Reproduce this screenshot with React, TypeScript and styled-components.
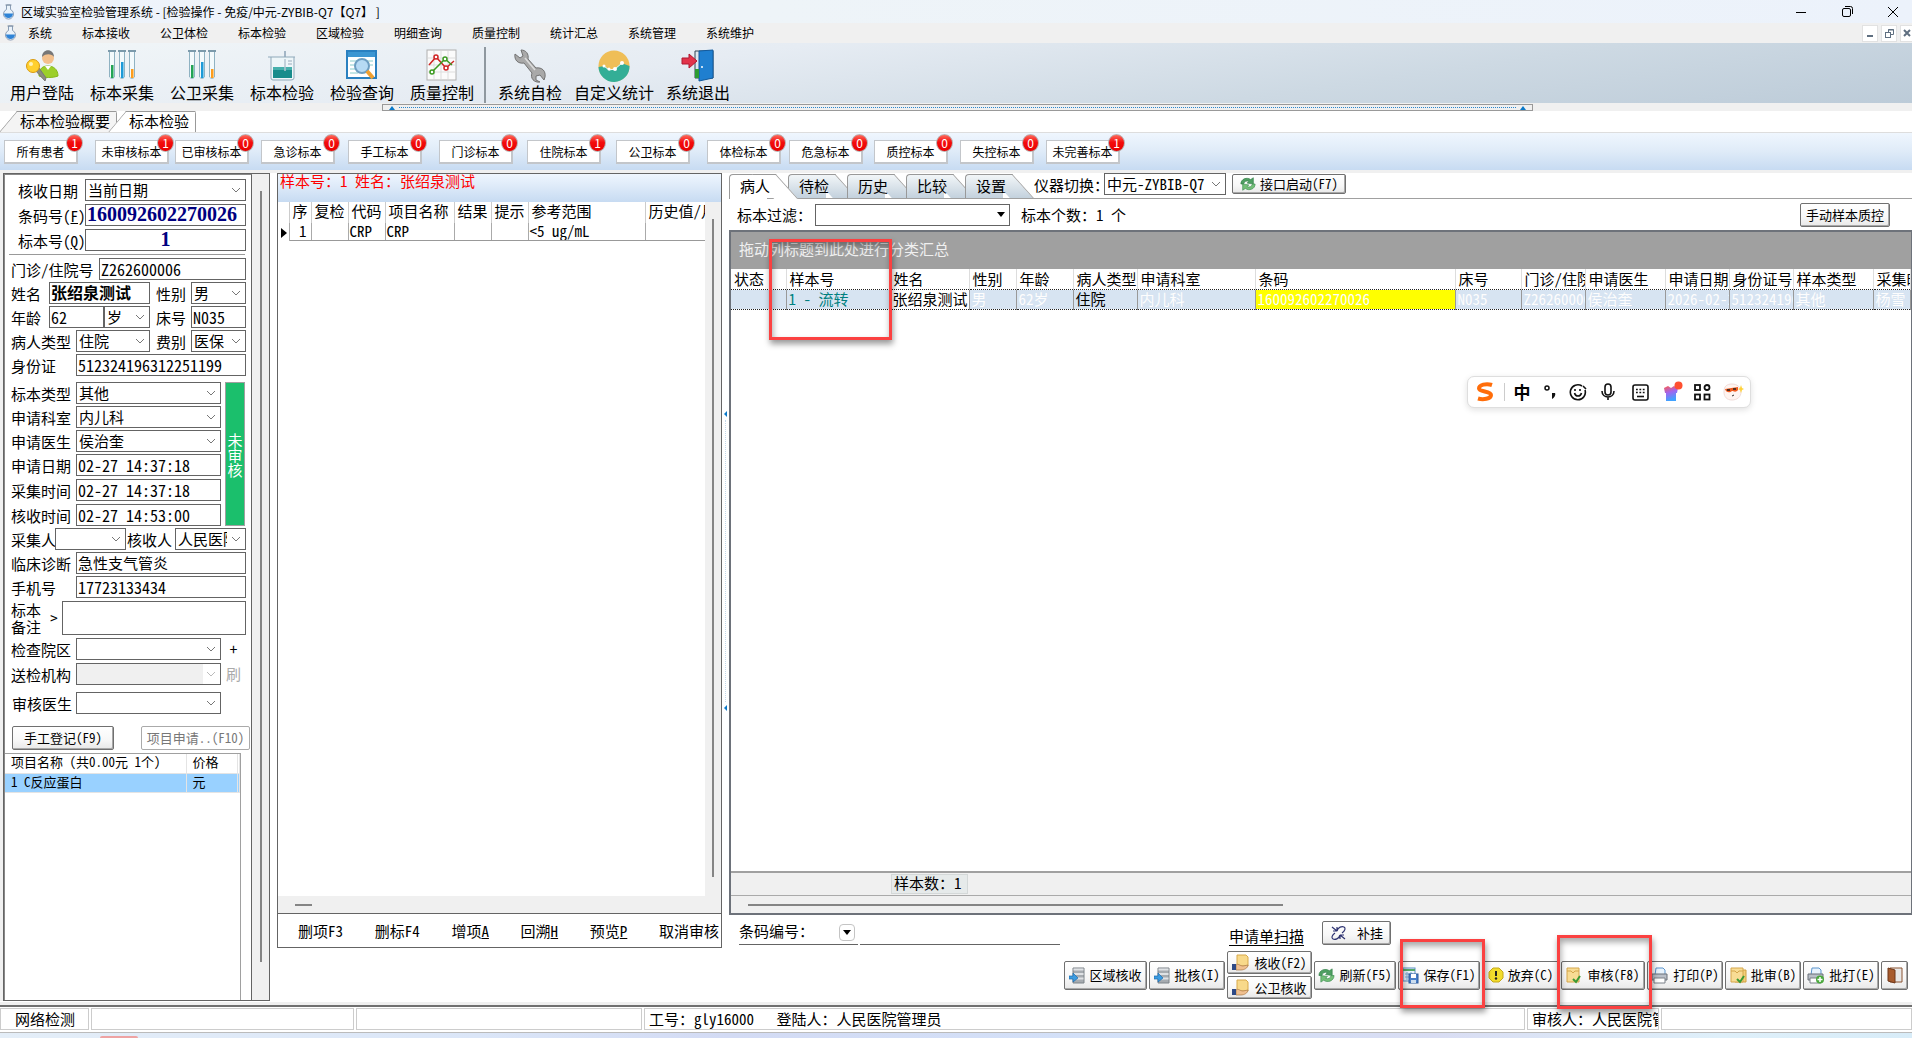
import React from 'react';
import styled, { createGlobalStyle, css } from 'styled-components';

const song = '"Noto Sans Mono CJK SC", "Liberation Serif", "Noto Sans CJK SC", serif';
const ui = '"Noto Sans CJK SC", "Noto Sans", sans-serif';
const line = '#646464';

const Global = createGlobalStyle`
  *, *::before, *::after { box-sizing: border-box; }
  html, body { margin: 0; background: #f0f0f0; }
  body { font: 15px/18px ${song}; color: #000; overflow: hidden; }
  button, input, select, textarea { font: inherit; color: inherit; margin: 0; border-radius: 0; }
  table { border-collapse: collapse; table-layout: fixed; }
  th { font-weight: 400; text-align: left; }
  th, td { padding: 0; white-space: nowrap; overflow: hidden; }
`;

const Shell = styled.div`
  position: relative;
  display: flex;
  flex-direction: column;
  min-height: 100vh;
`;

/* ---------- window chrome ---------- */
const TitleBar = styled.header`
  display: flex;
  align-items: center;
  height: 23px;
  padding-left: 2px;
  gap: 6px;
  background: linear-gradient(90deg, #eef3fb, #eef4f8 40%, #ecf2fb);
  font: 12px/18px ${ui};
`;
const WindowButtons = styled.div`
  display: flex;
  margin: 0 -4px 0 auto;
`;
const WindowButton = styled.button`
  display: grid;
  place-items: center;
  width: 46px;
  height: 20px;
  padding: 0;
  border: 0;
  background: none;
`;
const MenuBar = styled.nav`
  display: flex;
  align-items: center;
  height: 20px;
  padding-left: 4px;
  background: #f0f0f0;
  font: 12px/16px ${ui};
`;
const MenuItem = styled.button<{ $first?: boolean }>`
  width: ${(p) => (p.$first ? 50 : 78)}px;
  padding: 0 ${(p) => (p.$first ? 4 : 0)}px 0 0;
  border: 0;
  background: none;
  text-align: center;
`;
const MdiButtons = styled.div`
  display: flex;
  gap: 3px;
  margin-left: auto;
`;
const MdiButton = styled.button`
  display: grid;
  place-items: center;
  width: 16px;
  height: 17px;
  padding: 0;
  border: 1px solid #e2e2e2;
  background: #fff;
  &:last-child { width: 12px; border-right: 0; }
`;
const Toolbar = styled.div`
  display: flex;
  height: 60px;
  padding-left: 2px;
  background: linear-gradient(172deg, #f1f6f8 0%, #e6ecf3 35%, #cdd9e3 70%, #bccbd8 100%);
`;
const Tool = styled.button<{ $w?: number }>`
  display: flex;
  flex-direction: column;
  align-items: center;
  justify-content: flex-start;
  width: ${(p) => p.$w ?? 80}px;
  padding: 6px 0 0;
  border: 0;
  background: none;
  font-size: 16px;
  line-height: 18px;
  white-space: nowrap;
  svg { display: block; }
`;
const ToolDivider = styled.span`
  width: 2px;
  margin: 4px 4px 0 2px;
  background: #8f989f;
`;
const TopSplitter = styled.div`
  display: flex;
  align-items: center;
  justify-content: space-between;
  width: 60.2%;
  height: 7px;
  margin: 1px 0 0 20%;
  padding: 0 6px;
  border: 1px solid #999;
  &::before, &::after {
    content: '';
    border: 3px solid transparent;
    border-top: 0;
    border-bottom: 4px solid #0a78c8;
  }
`;
const Dots = styled.span`
  flex: 1;
  margin: 0 4px;
  border-top: 1px dotted #2a86cc;
`;

/* ---------- document tabs ---------- */
const DocTabs = styled.div`
  display: flex;
  height: 22px;
  background: #fff;
  border-bottom: 1px solid #ddd;
`;
const DocTab = styled.button<{ $active?: boolean }>`
  position: relative;
  z-index: ${(p) => (p.$active ? 2 : 1)};
  height: 21px;
  margin-right: -8px;
  padding: 0 6px 2px 20px;
  border: 0;
  border-right: 1px solid #999;
  border-top-right-radius: 3px;
  background: none;
  line-height: 18px;
  white-space: nowrap;
  &::before {
    content: '';
    position: absolute;
    z-index: -1;
    inset: 0 0 0 8px;
    border: 1px solid #999;
    border-width: 1px 0 0 1px;
    transform: skewX(-40deg);
    background: ${(p) => (p.$active ? '#fff' : '#f4f4f4')};
    clip-path: inset(0 8px 0 0);
  }
  &::after {
    content: '';
    position: absolute;
    z-index: -1;
    inset: 0 0 0 24px;
    border-top: 1px solid #999;
    background: ${(p) => (p.$active ? '#fff' : '#f4f4f4')};
  }
`;

/* ---------- sample counters ---------- */
const Counters = styled.div`
  display: grid;
  grid-template-columns: 91px 80px 86px 87px 91px 88px 89px 91px 82px 85px 86px 86px 74px;
  align-items: center;
  height: 37px;
  padding: 0 4px;
  background: linear-gradient(#eff6fe, #dfebf8 50%, #c7dbf2);
`;
const Counter = styled.button`
  position: relative;
  width: 74px;
  height: 24px;
  padding: 1px 0 0;
  border: 2px solid #c3c6ca;
  border-width: 1px 2px 2px 1px;
  background: #fff;
  font: 12px/20px ${ui};
`;
const Badge = styled.span`
  position: absolute;
  top: -7px;
  right: -7px;
  width: 17px;
  height: 18px;
  border: 1px solid #b9b0b0;
  border-radius: 50%;
  background: linear-gradient(#ff6a5c, #f30d0d 45%, #e80000);
  color: #fff;
  font: 12px/15px ${ui};
  text-align: center;
`;

/* ---------- main area ---------- */
const Main = styled.main`
  display: flex;
  flex: 1;
  margin: 3px 0 3px;
  background: #fff;
  min-height: 0;
`;
const LeftPanel = styled.section`
  display: flex;
  flex: none;
  width: 267px;
  margin: 0 0 1px 3px;
  border: 1px solid ${line};
  box-shadow: -3px 0 #f0f0f0;
`;
const LeftBody = styled.div`
  display: flex;
  flex-direction: column;
  width: 248px;
  border: 1px solid #888;
  border-width: 1px 1px 0;
  border-right-color: ${line};
`;
const ScrollTrack = styled.div<{ $top: number; $bottom: number }>`
  flex: 1;
  display: flex;
  justify-content: center;
  padding: ${(p) => p.$top}px 0 ${(p) => p.$bottom}px;
  background: #f0f0f0;
  &::before { content: ''; width: 2px; background: #858585; }
`;
const Form = styled.form`
  display: flex;
  flex-direction: column;
  padding: 4px 5px 0 6px;
`;
const Group = styled.div<{ $gap?: number; $mt?: number }>`
  display: flex;
  flex-direction: column;
  gap: ${(p) => p.$gap ?? 2}px;
  margin-top: ${(p) => p.$mt ?? 0}px;
`;
const Row = styled.div`
  display: flex;
  align-items: center;
`;
const Label = styled.label<{ $w: number; $pl?: number }>`
  flex: none;
  width: ${(p) => p.$w}px;
  padding-left: ${(p) => p.$pl ?? 0}px;
  line-height: 17px;
  white-space: nowrap;
`;
const Rule = styled.hr`
  width: 236px;
  height: 2px;
  margin: 3px 0 2px -2px;
  border: 0;
  border-top: 1px solid #999;
`;
const fieldBox = css<{ $w?: number }>`
  ${(p) => (p.$w ? `flex: none; width: ${p.$w}px;` : 'flex: 1; min-width: 0;')}
  height: 22px;
  border: 1px solid ${line};
  background: #fff;
`;
const Input = styled.input<{ $w?: number; $look?: 'code' | 'name' | 'digits'; $center?: boolean }>`
  ${fieldBox}
  padding: 0 1px 1px;
  ${(p) => p.$look === 'digits' && 'font-size: 16px;'}
  ${(p) => p.$look === 'name' && 'font-size: 16px; font-weight: 700; padding-bottom: 3px;'}
  ${(p) => p.$look === 'code' && 'font: 700 20px/20px "Liberation Serif", serif; color: #000080;'}
  ${(p) => p.$center && 'text-align: center;'}
`;
const SelectBox = styled.span<{ $w?: number; $off?: boolean }>`
  ${fieldBox}
  position: relative;
  display: flex;
  ${(p) => p.$off && 'background: linear-gradient(90deg, #f0f0f0 88%, #fff 88%); color: #aaa;'}
  svg { position: absolute; right: 4px; top: 7px; pointer-events: none; }
`;
const NativeSelect = styled.select`
  appearance: none;
  width: 100%;
  padding: 0 18px 1px 2px;
  border: 0;
  background: none;
`;
const FlaggedRow = styled.div`
  display: flex;
  margin-top: 6px;
`;
const StateFlag = styled.div`
  display: grid;
  place-items: center;
  width: 20px;
  margin: 0 1px 0 4px;
  border: 1px solid #a0a0a0;
  background: #1bbf6c;
  color: #fff;
  line-height: 15px;
  text-align: center;
`;
const Memo = styled.textarea`
  flex: 1;
  min-width: 0;
  height: 34px;
  border: 1px solid ${line};
  resize: none;
`;
const FlatButton = styled.button<{ $w: number }>`
  width: ${(p) => p.$w}px;
  padding: 0;
  border: 0;
  background: none;
  &:disabled { color: #aaa; }
`;
const PushButton = styled.button<{ $w?: number; $h?: number }>`
  display: flex;
  align-items: center;
  justify-content: center;
  gap: 4px;
  flex: none;
  width: ${(p) => (p.$w ? `${p.$w}px` : 'auto')};
  height: ${(p) => p.$h ?? 24}px;
  padding: 0;
  border: 1px solid #707070;
  border-radius: 2px;
  background: linear-gradient(#fff, #f7f7f7 60%, #e8e8e8);
  box-shadow: inset -1px -1px #a8a8a8;
  font-size: 13px;
  line-height: 16px;
  white-space: nowrap;
  &:disabled { color: #777; background: #fff; border-color: #aaa; box-shadow: none; }
`;
const TabButton = styled(PushButton)`
  margin: 1px 0 0 6px;
`;
const WideButton = styled(PushButton)`
  gap: 10px;
`;
const FormButtons = styled.div`
  display: flex;
  justify-content: space-between;
  margin: 12px -4px 3px 1px;
`;
const FeeArea = styled.div`
  flex: 1;
  width: 236px;
  border: 1px solid #a0a0a0;
  border-width: 1px 1px 0 0;
`;
const FeeTable = styled.table`
  width: 100%;
  font-size: 13px;
  line-height: 16px;
  th, td { padding: 0 0 2px 6px; border: 1px solid #e4e4e4; border-width: 0 1px 1px 0; height: 19px; }
  td { background: #99d1ff; }
`;

/* ---------- result panel ---------- */
const MidPanel = styled.section`
  display: flex;
  flex-direction: column;
  flex: none;
  width: 445px;
  margin: 0 0 54px 7px;
  border: 1px solid ${line};
`;
const SampleTitle = styled.h2`
  height: 28px;
  margin: 0;
  padding-left: 2px;
  background: linear-gradient(#eff6fe, #c7dbf2);
  color: #f00;
  font: 15px/14px ${song};
`;
const ResultArea = styled.div`
  display: flex;
  flex: 1;
`;
const ResultBody = styled.div`
  width: 427px;
  overflow: hidden;
`;
const ResultTable = styled.table`
  width: 427px;
  th { height: 21px; padding: 0 0 3px 3px; border-right: 1px solid #ccc; }
  td { height: 17px; line-height: 16px; padding-left: 1px; border-right: 1px solid #aaa; border-bottom: 1px solid #999; }
  th:first-child, td:first-child { padding-left: 3px; border-bottom: 0; }
  td:nth-child(2) { text-align: right; padding-right: 4px; }
  th:last-child, td:last-child { border-right: 0; }
`;
const HScroll = styled.div<{ $left: number; $w: string }>`
  display: flex;
  align-items: center;
  height: 17px;
  padding-left: ${(p) => p.$left}px;
  background: #f0f0f0;
  &::before { content: ''; width: ${(p) => p.$w}; height: 2px; background: #858585; }
`;
const ResultActions = styled.div`
  display: flex;
  align-items: center;
  justify-content: space-between;
  height: 34px;
  padding: 0 2px 0 20px;
  border-top: 1px solid ${line};
`;
const TextButton = styled.button`
  padding: 0;
  border: 0;
  background: none;
  white-space: nowrap;
`;
const SideSplitter = styled.div`
  display: flex;
  flex-direction: column;
  flex: none;
  align-items: center;
  justify-content: space-between;
  width: 7px;
  height: 300px;
  margin-top: 238px;
  &::before, &::after {
    content: '';
    border: 3px solid transparent;
    border-left: 0;
    border-right-color: #0a78c8;
  }
`;
const DotsV = styled.span`
  flex: 1;
  margin: 3px 0;
  border-left: 1px dotted #c4d8ea;
`;

/* ---------- patient panel ---------- */
const RightPanel = styled.section`
  display: flex;
  flex-direction: column;
  flex: 1;
  min-width: 0;
`;
const TabRow = styled.div`
  display: flex;
  align-items: flex-start;
  height: 26px;
  border-bottom: 1px solid #a0a0a0;
`;
const PanelTab = styled.button<{ $active?: boolean }>`
  position: relative;
  z-index: ${(p) => (p.$active ? 3 : 1)};
  width: 59px;
  height: 25px;
  margin-top: 1px;
  padding: 0 0 2px 11px;
  border: 0;
  background: none;
  text-align: left;
  line-height: 22px;
  &::before, &::after {
    content: '';
    position: absolute;
    z-index: -1;
    top: 0;
    height: ${(p) => (p.$active ? 25 : 24)}px;
    border-top: 1px solid #999;
    background: ${(p) => (p.$active ? '#fff' : 'linear-gradient(#f2f6f8, #c3d1dd)')};
  }
  &::before { left: 0; width: 38px; border-left: 1px solid #999; border-top-left-radius: 4px; }
  &::after { left: 34px; width: 24px; border-right: 1px solid #999; transform: skewX(42deg); }
`;
const DeviceLabel = styled.label`
  width: 80px;
  padding-left: 10px;
  line-height: 24px;
  white-space: nowrap;
`;
const FilterRow = styled.div`
  display: flex;
  align-items: center;
  height: 31px;
  padding: 0 22px 0 8px;
`;
const FilterCount = styled.span`
  margin: 0 auto 0 11px;
`;
const Grid = styled.div`
  position: relative;
  display: flex;
  flex-direction: column;
  flex: 1;
  border: 2px solid #6d727a;
  border-right-width: 1px;
`;
const GroupHint = styled.div`
  height: 37px;
  padding-left: 8px;
  background: #a0a0a0;
  color: #f0f0f0;
  line-height: 34px;
`;
const PatientTable = styled.table`
  width: 100%;
  th { height: 20px; padding: 0 0 1px 3px; border-right: 1px solid #ddd; line-height: 17px; }
`;
const Cell = styled.td<{ $kind?: string }>`
  height: 20px;
  padding: 0 0 1px 2px;
  line-height: 17px;
  border: 1px dotted #222;
  border-width: 1px 0;
  border-right: 1px solid #999;
  background: ${(p) => (p.$kind === 'code' ? '#ffff00' : p.$kind === 'name' ? '#fff' : '#d7e4f2')};
  color: ${(p) =>
    p.$kind === 'no' ? '#008080' : p.$kind === 'name' || p.$kind === 'type' ? '#000' : '#fdfdfd'};
`;
const GridSpace = styled.div`
  flex: 1;
`;
const GridFooter = styled.div`
  display: flex;
  align-items: center;
  height: 25px;
  padding-left: 160px;
  border-top: 2px solid #a0a0a0;
  border-bottom: 1px solid #aaa;
  background: #f0f0f0;
`;
const FooterCell = styled.span`
  width: 77px;
  height: 20px;
  padding-left: 2px;
  border: 1px solid #d4d8d8;
  background: #e6eaea;
  line-height: 16px;
`;
const Highlight = styled.span<{ $x: number; $y: number; $w: number; $h: number }>`
  position: absolute;
  z-index: 5;
  left: ${(p) => p.$x}px;
  top: ${(p) => p.$y}px;
  width: ${(p) => p.$w}px;
  height: ${(p) => p.$h}px;
  border: 3px solid #fb4141;
  box-shadow: 1px 4px 6px rgba(0, 0, 0, 0.4), inset 1px 4px 6px rgba(0, 0, 0, 0.35);
  pointer-events: none;
`;
const Actions = styled.div`
  display: flex;
  justify-content: space-between;
  height: 87px;
  padding: 6px 4px 0 10px;
`;
const BarcodeBox = styled.div`
  display: flex;
  gap: 2px;
  height: 24px;
`;
const BarcodeMode = styled.div`
  display: flex;
  justify-content: space-between;
  width: 119px;
  padding-right: 3px;
  border-bottom: 1px solid ${line};
  line-height: 20px;
`;
const DropButton = styled.button`
  display: grid;
  place-items: center;
  width: 16px;
  height: 17px;
  margin-top: 3px;
  padding: 0;
  border: 1px solid #c4c4c4;
  border-radius: 4px;
  background: #fff;
`;
const LineInput = styled.input`
  width: 200px;
  padding: 0;
  border: 0;
  border-bottom: 1px solid ${line};
  background: none;
`;
const ActionColumn = styled.div`
  display: flex;
  flex-direction: column;
  gap: 6px;
`;
const ScanRow = styled.div`
  display: flex;
  align-items: center;
  gap: 18px;
  height: 24px;
  padding-left: 165px;
`;
const ScanLink = styled.a`
  padding-top: 6px;
  color: #000;
  text-decoration: underline;
  text-underline-offset: 3px;
`;
const ButtonRow = styled.div`
  display: flex;
  align-items: center;
  gap: 2px;
`;
const Stack = styled.div`
  display: flex;
  flex-direction: column;
  gap: 2px;
`;
const Marked = styled.span`
  position: relative;
`;

/* ---------- status bar ---------- */
const StatusBar = styled.footer`
  display: flex;
  gap: 2px;
  height: 28px;
  padding: 1px 0 2px;
  border-top: 2px solid #707070;
  border-bottom: 1px solid #bbb;
  background: #fff;
`;
const StatusCell = styled.div<{ $w?: number; $pl?: number }>`
  ${(p) => (p.$w ? `width: ${p.$w}px;` : 'flex: 1; min-width: 0;')}
  padding-left: ${(p) => p.$pl ?? 4}px;
  border: 1px solid #ccc;
  line-height: 20px;
  white-space: pre;
  overflow: hidden;
`;
const Taskbar = styled.div`
  position: relative;
  height: 5px;
  background: linear-gradient(90deg, #e4eef8, #dbe6f8 25%, #d3dbf4 38%, #d4e2f9 60%, #d9ddf3 75%, #dff0fa 90%, #d8ecf8);
  &::before {
    content: '';
    position: absolute;
    left: 100px;
    bottom: 0;
    width: 38px;
    height: 2px;
    border-radius: 3px 3px 0 0;
    background: #eea3a3;
  }
`;

/* ---------- input method bar ---------- */
const ImeBar = styled.div`
  position: absolute;
  z-index: 6;
  right: 161px;
  top: 376px;
  display: grid;
  grid-template-columns: 34px 4px 32px 24px 32px 28px 36px 30px 28px 34px;
  place-items: center;
  height: 32px;
  border: 1px solid #dedede;
  border-radius: 7px;
  background: #fff;
  box-shadow: 0 2px 6px rgba(0, 0, 0, 0.12);
  font: 700 17px/18px ${ui};
`;
const ImeDivider = styled.span`
  width: 1px;
  height: 18px;
  background: #ccc;
`;

/* ---------- drawings ---------- */
const Chevron = ({ off }: { off?: boolean }) => (
  <svg width="10" height="7" viewBox="0 0 10 7">
    <path d="M1 1l4 4 4-4" fill="none" stroke={off ? '#bbb' : '#777'} />
  </svg>
);
const Triangle = () => (
  <svg width="8" height="5" viewBox="0 0 8 5"><path d="M0 0h8L4 5z" fill="#000" /></svg>
);
const Flask = () => (
  <svg width="13" height="16" viewBox="0 0 13 16">
    <path d="M4.500 1v4.500a5 5 0 1 0 4 0V1z" fill="#eaf2fa" stroke="#8a9db5" />
    <path d="M2 9.500h9a4.500 4.500 0 0 1-9 0z" fill="#2f83d6" />
    <path d="M3.500 1h6" stroke="#7a8ba0" />
  </svg>
);
const UserKey = () => (
  <svg width="34" height="34" viewBox="0 0 34 34">
    <path d="M14 27c0-8 4-10 9-10s10 3 10 10c-5 2-14 2-19 0z" fill="#9ccf2a" stroke="#86b81c" />
    <path d="M20 17l3 4 3-4z" fill="#fff" />
    <circle cx="23" cy="9" r="6" fill="#f3c08c" />
    <path d="M17 8c0-9 12-9 12 0-2-3-8-4-12 0z" fill="#777" />
    <path d="M10 21l10 11 1-3-7-10z" fill="#8d8d7c" stroke="#777" />
    <circle cx="8" cy="17" r="6.500" fill="#ffd02e" stroke="#d99a10" />
    <circle cx="6" cy="15" r="2" fill="#fff3b8" />
  </svg>
);
const Tubes = () => (
  <svg width="32" height="34" viewBox="0 0 32 34">
    {[['#23a455', 15], ['#1d9ad8', 12], ['#ff9d1c', 19]].map(([c, y], i) => (
      <g key={i} transform={`translate(${2 + i * 10} 1)`}>
        <path d="M1.500 1v26a3 3 0 0 0 5 0V1" fill="#f3fafc" stroke="#8fb2c2" />
        <path d="M0 1h8" stroke="#7c9aab" strokeWidth="2" />
        <rect x="3" y={y as number} width="2.500" height={28 - (y as number)} fill={c as string} />
      </g>
    ))}
  </svg>
);
const Beaker = () => (
  <svg width="34" height="34" viewBox="0 0 34 34">
    <path d="M20 2v20" stroke="#a3b6c6" strokeWidth="2" />
    <path d="M3 8h27M6 8v21q0 2 2 2h18q3 0 3-2V8" fill="#eef6f9" stroke="#8fa9ba" />
    <rect x="8" y="18" width="19" height="11" fill="#178c8c" />
    <path d="M8 18h19v3H8z" fill="#46b0ac" />
    <path d="M20 10v12" stroke="#b5c4d0" strokeWidth="1.500" />
    <path d="M23 12h4M23 15h4" stroke="#9ab" />
  </svg>
);
const SearchWindow = () => (
  <svg width="32" height="34" viewBox="0 0 32 34">
    <rect x="1" y="2" width="29" height="27" fill="#fff" stroke="#2a80c0" strokeWidth="2" />
    <rect x="2" y="3" width="27" height="5" fill="#3c96d2" />
    <path d="M4 12h8M4 16h5M4 20h5M4 24h8M22 12h5M24 16h3" stroke="#8cc" />
    <circle cx="16" cy="17" r="7" fill="#b6daf4" stroke="#6d9ec2" strokeWidth="2" />
    <path d="M21 22l6 7" stroke="#f0a030" strokeWidth="4" />
  </svg>
);
const QcChart = () => (
  <svg width="32" height="34" viewBox="0 0 32 34">
    <rect x="1" y="1" width="29" height="30" fill="#fbfbfb" stroke="#b0b0b0" />
    <path d="M2 9h27M2 16h27M2 23h27M8 2v28M15 2v28M22 2v28" stroke="#ddd" />
    <path d="M3 16l7-8 10 11 8-7" fill="none" stroke="#d02424" strokeWidth="1.500" />
    <path d="M6 23l13-13 7 6" fill="none" stroke="#3a9a20" strokeWidth="1.500" />
    <g fill="#fff" strokeWidth="1.500">
      <circle cx="10" cy="8" r="2" stroke="#d02424" /><circle cx="20" cy="19" r="2" stroke="#d02424" />
      <circle cx="6" cy="23" r="2" stroke="#3a9a20" /><circle cx="19" cy="10" r="2" stroke="#3a9a20" />
    </g>
  </svg>
);
const Wrench = () => (
  <svg width="34" height="34" viewBox="0 0 34 34">
    <path d="M8 1c5 0 8 4 7 9l8 9c6-1 10 3 9 9l-1 3-4-5-4 1 0 4 4 2c-6 1-10-4-8-9L11 14C5 15 1 11 2 5l5 4 3-2z" fill="#a9a9a9" stroke="#727272" />
    <path d="M12 9l10 12" stroke="#dcdcdc" strokeWidth="1.500" />
  </svg>
);
const StatsBall = () => (
  <svg width="34" height="34" viewBox="0 0 34 34">
    <circle cx="17" cy="17" r="15.500" fill="#efbe57" />
    <path d="M1.500 18l6-1 5 4 5-1 7-6 8 3a15.500 15.500 0 0 1-31 1z" fill="#33ae96" />
    <path d="M7 17l5 4 6-1 7-6" fill="none" stroke="#fff" />
    <g fill="#fff"><circle cx="7" cy="17" r="1.500" /><circle cx="12" cy="20" r="1.500" /><circle cx="18" cy="20" r="2" /><circle cx="25" cy="14" r="2" /></g>
  </svg>
);
const ExitDoor = () => (
  <svg width="34" height="34" viewBox="0 0 34 34">
    <path d="M14 2h18v27H14z" fill="#dfe8ef" stroke="#345" />
    <path d="M18 2l14-1v28l-14 3z" fill="#1f7fd0" stroke="#125a9c" />
    <path d="M14 20h4v9h-4z" fill="#2d9b32" />
    <path d="M1 9h7V5l8 7-8 7v-4H1z" fill="#e2334a" stroke="#b01830" />
    <circle cx="21" cy="18" r="1" fill="#fff" />
  </svg>
);
const Refresh = ({ s = 18 }: { s?: number }) => (
  <svg width={s} height={s} viewBox="0 0 18 18">
    <path d="M1 9c0-6 7-8 11-5l3-2 0 7-7-1 2-2c-3-1-5 0-6 3z" fill="#4f9f62" stroke="#2e7d45" strokeWidth=".7" />
    <path d="M17 9c0 6-7 8-11 5l-3 2 0-7 7 1-2 2c3 1 5 0 6-3z" fill="#74bf78" stroke="#3b8d50" strokeWidth=".7" />
  </svg>
);
const Server = () => (
  <svg width="16" height="18" viewBox="0 0 16 18">
    <path d="M4 2h11v15H4z" fill="#a6abb0" stroke="#7d8389" />
    <path d="M4.500 3.500h10M4.500 8h10M4.500 12.500h10" stroke="#dfe2e5" strokeWidth="2" />
    <path d="M0 10h4V7l5 5-5 4v-3H0z" fill="#3b9be0" stroke="#1c6cae" strokeWidth=".7" />
  </svg>
);
const HandDoc = () => (
  <svg width="18" height="17" viewBox="0 0 18 17">
    <path d="M5 1h9l2 2v9H5z" fill="#f8d98a" stroke="#d8a94a" />
    <path d="M4 11c2-2 4 1 7 1l5-1c0 3-4 5-7 5H4z" fill="#f0c090" stroke="#a87848" strokeWidth=".7" />
    <path d="M0 10h4v6H0z" fill="#2f4a86" />
  </svg>
);
const SaveIcon = () => (
  <svg width="17" height="17" viewBox="0 0 17 17">
    <rect x="1" y="1" width="12" height="13" fill="#eaf3fb" stroke="#5a8fc4" />
    <path d="M1 3h12" stroke="#55a868" strokeWidth="2" />
    <path d="M3 7h8M3 10h8M5 5v8M9 5v8" stroke="#7aa8d0" />
    <rect x="7" y="7" width="9" height="9" fill="#4a7fc8" stroke="#2a5a9c" />
    <rect x="9" y="7" width="5" height="4" fill="#fff" /><rect x="9" y="13" width="5" height="3" fill="#cde" />
  </svg>
);
const Alert = () => (
  <svg width="16" height="16" viewBox="0 0 16 16">
    <path d="M5 1h6l4 4v6l-4 4H5l-4-4V5z" fill="#f2dc2c" stroke="#c4a81a" />
    <path d="M8 4v5" stroke="#222" strokeWidth="2" /><circle cx="8" cy="11.500" r="1.200" fill="#222" />
  </svg>
);
const DocCheck = ({ two }: { two?: boolean }) => (
  <svg width="17" height="17" viewBox="0 0 17 17">
    {two && <path d="M5 3h11v12H5z" fill="#f4cf78" stroke="#cfa040" />}
    <path d="M1 1h12v14H1z" fill="#f8dc94" stroke="#d4a64c" />
    <path d="M1 4h4l2 2 2-2h4" fill="none" stroke="#d4a64c" />
    <path d="M7 12l3 3 4-6" fill="none" stroke="#3a9a34" strokeWidth="2" />
  </svg>
);
const Printer = ({ plus }: { plus?: boolean }) => (
  <svg width="18" height="17" viewBox="0 0 18 17">
    <path d="M5 1h7l2 2v5H4z" fill="#e8f3fd" stroke="#5b94cc" />
    <path d="M1 7h15v6H1z" fill="#b9bfc8" stroke="#6a7078" />
    <path d="M3 11h11v5H3z" fill="#fff" stroke="#7a8088" />
    {plus && <><circle cx="13" cy="12.500" r="4" fill="#4aa83c" /><path d="M13 10v5M10.500 12.500h5" stroke="#fff" strokeWidth="1.500" /></>}
  </svg>
);
const Door = () => (
  <svg width="16" height="17" viewBox="0 0 16 17">
    <path d="M3 1h12v14H3z" fill="#e8e8e8" stroke="#8a5230" />
    <path d="M1 1l7 2v13l-7-2z" fill="#a85c2e" stroke="#6e3618" />
  </svg>
);
const Swap = () => (
  <svg width="17" height="16" viewBox="0 0 17 16" fill="none" stroke="#2c3170" strokeWidth="1.200">
    <path d="M7 6c1-4 5-5 7-4s1 4-2 6M7 6L2 2M7 6V2M7 6H3" />
    <path d="M10 10c-1 4-5 5-7 4s-1-4 2-6M10 10l5 4M10 10v4M10 10h4" />
  </svg>
);

/* ---------- building blocks ---------- */
type SelectProps = { id: string; value?: string; w?: number; off?: boolean; label?: string };
const Select = ({ id, value = '', w, off, label }: SelectProps) => (
  <SelectBox $w={w} $off={off}>
    <NativeSelect id={id} disabled={off} defaultValue={value} aria-label={label}>
      <option>{value}</option>
    </NativeSelect>
    <Chevron off={off} />
  </SelectBox>
);

const menus = ['标本接收', '公卫体检', '标本检验', '区域检验', '明细查询', '质量控制', '统计汇总', '系统管理', '系统维护'];
const counters: [string, number][] = [
  ['所有患者', 1], ['未审核标本', 1], ['已审核标本', 0], ['急诊标本', 0], ['手工标本', 0], ['门诊标本', 0], ['住院标本', 1],
  ['公卫标本', 0], ['体检标本', 0], ['危急标本', 0], ['质控标本', 0], ['失控标本', 0], ['未完善标本', 1],
];
const columns: [string, number | undefined, string, string?][] = [
  ['状态', 55, ''], ['样本号', 104, '1 - 流转', 'no'], ['姓名', 79, '张绍泉测试', 'name'], ['性别', 47, '男'], ['年龄', 57, '62岁'],
  ['病人类型', 64, '住院', 'type'], ['申请科室', 118, '内儿科'], ['条码', 200, '160092602270026', 'code'], ['床号', 66, 'N035'],
  ['门诊/住院号', 64, 'Z262600006'], ['申请医生', 80, '侯治奎'], ['申请日期', 64, '2026-02-27'], ['身份证号', 64, '512324196312251199'],
  ['样本类型', 80, '其他'], ['采集时间', undefined, '杨雪'],
];

export default function App() {
  return (
    <Shell>
      <Global />
      <TitleBar>
        <Flask />
        <span>区域实验室检验管理系统 - [检验操作 - 免疫/中元-ZYBIB-Q7【Q7】 ]</span>
        <WindowButtons>
          <WindowButton aria-label="最小化"><svg width="10" height="10"><path d="M0 5.500h10" stroke="#000" /></svg></WindowButton>
          <WindowButton aria-label="还原">
            <svg width="11" height="11" fill="none" stroke="#000"><rect x=".5" y="2.500" width="8" height="8" rx="1.500" /><path d="M3 .500h5.500a2 2 0 0 1 2 2V8" /></svg>
          </WindowButton>
          <WindowButton aria-label="关闭"><svg width="10" height="10"><path d="M0 0l10 10M10 0L0 10" stroke="#000" /></svg></WindowButton>
        </WindowButtons>
      </TitleBar>
      <MenuBar>
        <Flask />
        <MenuItem $first>系统</MenuItem>
        {menus.map((m) => <MenuItem key={m}>{m}</MenuItem>)}
        <MdiButtons>
          <MdiButton aria-label="最小化子窗口"><svg width="8" height="8"><path d="M1 7h6" stroke="#5f6f80" strokeWidth="2" /></svg></MdiButton>
          <MdiButton aria-label="还原子窗口"><svg width="9" height="9" fill="none" stroke="#5f6f80"><path d="M3.500 3V.500h5v5H6M3 1h6" /><rect x=".5" y="3.500" width="5" height="5" /></svg></MdiButton>
          <MdiButton aria-label="关闭子窗口"><svg width="8" height="8"><path d="M1 1l6 6M7 1L1 7" stroke="#5f6f80" strokeWidth="2" /></svg></MdiButton>
        </MdiButtons>
      </MenuBar>
      <Toolbar>
        <Tool><UserKey />用户登陆</Tool>
        <Tool><Tubes />标本采集</Tool>
        <Tool><Tubes />公卫采集</Tool>
        <Tool><Beaker />标本检验</Tool>
        <Tool><SearchWindow />检验查询</Tool>
        <Tool><QcChart />质量控制</Tool>
        <ToolDivider />
        <Tool><Wrench />系统自检</Tool>
        <Tool $w={88}><StatsBall />自定义统计</Tool>
        <Tool><ExitDoor />系统退出</Tool>
      </Toolbar>
      <TopSplitter><Dots /></TopSplitter>
      <DocTabs>
        <DocTab>标本检验概要</DocTab>
        <DocTab $active>标本检验</DocTab>
      </DocTabs>
      <Counters>
        {counters.map(([name, n]) => <Counter key={name}>{name}<Badge>{n}</Badge></Counter>)}
      </Counters>

      <Main>
        <LeftPanel>
          <LeftBody>
            <Form>
              <Group $gap={3}>
                <Row><Label htmlFor="recv" $w={74} $pl={7}>核收日期</Label><Select id="recv" value="当前日期" /></Row>
                <Row><Label htmlFor="code" $w={74} $pl={7}>条码号(<u>F</u>)</Label><Input id="code" $look="code" defaultValue="160092602270026" /></Row>
                <Row><Label htmlFor="no" $w={74} $pl={7}>标本号(<u>Q</u>)</Label><Input id="no" $look="code" $center defaultValue="1" /></Row>
              </Group>
              <Rule />
              <Group>
                <Row><Label htmlFor="visit" $w={88}>门诊/住院号</Label><Input id="visit" $look="digits" defaultValue="Z262600006" /></Row>
                <Row>
                  <Label htmlFor="name" $w={38}>姓名</Label><Input id="name" $w={101} $look="name" defaultValue="张绍泉测试" />
                  <Label htmlFor="sex" $w={41} $pl={6}>性别</Label><Select id="sex" value="男" />
                </Row>
                <Row>
                  <Label htmlFor="age" $w={38}>年龄</Label><Input id="age" $w={55} $look="digits" defaultValue="62" />
                  <Select id="unit" w={46} value="岁" label="年龄单位" />
                  <Label htmlFor="bed" $w={41} $pl={6}>床号</Label><Input id="bed" $look="digits" defaultValue="N035" />
                </Row>
                <Row>
                  <Label htmlFor="ptype" $w={65}>病人类型</Label><Select id="ptype" w={74} value="住院" />
                  <Label htmlFor="fee" $w={41} $pl={6}>费别</Label><Select id="fee" value="医保" />
                </Row>
                <Row><Label htmlFor="idno" $w={65}>身份证</Label><Input id="idno" $look="digits" defaultValue="512324196312251199" /></Row>
              </Group>
              <FlaggedRow>
                <Group $gap={3}>
                  <Group>
                    <Row><Label htmlFor="stype" $w={65}>标本类型</Label><Select id="stype" w={145} value="其他" /></Row>
                    <Row><Label htmlFor="dept" $w={65}>申请科室</Label><Select id="dept" w={145} value="内儿科" /></Row>
                    <Row><Label htmlFor="doc" $w={65}>申请医生</Label><Select id="doc" w={145} value="侯治奎" /></Row>
                    <Row><Label htmlFor="adate" $w={65}>申请日期</Label><Input id="adate" $w={145} $look="digits" defaultValue="02-27 14:37:18" /></Row>
                  </Group>
                  <Row><Label htmlFor="ctime" $w={65}>采集时间</Label><Input id="ctime" $w={145} $look="digits" defaultValue="02-27 14:37:18" /></Row>
                  <Row><Label htmlFor="rtime" $w={65}>核收时间</Label><Input id="rtime" $w={145} $look="digits" defaultValue="02-27 14:53:00" /></Row>
                </Group>
                <StateFlag><span>未<br />审<br />核</span></StateFlag>
              </FlaggedRow>
              <Group $mt={2}>
                <Row>
                  <Label htmlFor="cuser" $w={44}>采集人</Label><Select id="cuser" w={71} />
                  <Label htmlFor="ruser" $w={49} $pl={1}>核收人</Label><Select id="ruser" value="人民医院管理员" />
                </Row>
                <Row><Label htmlFor="diag" $w={65}>临床诊断</Label><Input id="diag" defaultValue="急性支气管炎" /></Row>
                <Row><Label htmlFor="tel" $w={65}>手机号</Label><Input id="tel" $look="digits" defaultValue="17723133434" /></Row>
              </Group>
              <Group $gap={3} $mt={3}>
                <Row>
                  <Label htmlFor="memo" $w={35}>标本<br />备注</Label>
                  <FlatButton type="button" $w={16}>&gt;</FlatButton>
                  <Memo id="memo" />
                </Row>
                <Row><Label htmlFor="area" $w={65}>检查院区</Label><Select id="area" w={145} /><FlatButton type="button" $w={30}>+</FlatButton></Row>
                <Row><Label htmlFor="org" $w={65}>送检机构</Label><Select id="org" w={145} off /><FlatButton type="button" disabled $w={38}>刷</FlatButton></Row>
              </Group>
              <Group $mt={7}>
                <Row><Label htmlFor="auditor" $w={65} $pl={1}>审核医生</Label><Select id="auditor" w={145} /></Row>
              </Group>
              <FormButtons>
                <PushButton type="button" $w={102}>手工登记(F9)</PushButton>
                <PushButton type="button" $w={109} disabled>项目申请..(F10)</PushButton>
              </FormButtons>
            </Form>
            <FeeArea>
              <FeeTable>
                <colgroup><col width="181" /><col width="51" /><col /></colgroup>
                <thead><tr><th>项目名称 (共0.00元 1个)</th><th>价格</th><th /></tr></thead>
                <tbody><tr><td>1 C反应蛋白</td><td>元</td><td /></tr></tbody>
              </FeeTable>
            </FeeArea>
          </LeftBody>
          <ScrollTrack $top={17} $bottom={38} />
        </LeftPanel>

        <MidPanel>
          <SampleTitle>样本号：1 姓名：张绍泉测试</SampleTitle>
          <ResultArea>
            <ResultBody>
              <ResultTable>
                <colgroup>
                  {[11, 22, 37, 37, 69, 37, 37, 117].map((w, i) => <col key={i} width={w} />)}<col />
                </colgroup>
                <thead>
                  <tr><th /><th>序</th><th>复检</th><th>代码</th><th>项目名称</th><th>结果</th><th>提示</th><th>参考范围</th><th>历史值/月</th></tr>
                </thead>
                <tbody>
                  <tr>
                    <td><svg width="6" height="10" viewBox="0 0 6 10"><path d="M0 0l6 5-6 5z" /></svg></td>
                    <td>1</td><td /><td>CRP</td><td>CRP</td><td /><td /><td>&lt;5 ug/mL</td><td />
                  </tr>
                </tbody>
              </ResultTable>
            </ResultBody>
            <ScrollTrack $top={17} $bottom={19} />
          </ResultArea>
          <HScroll $left={17} $w="17px" />
          <ResultActions>
            <TextButton>删项F3</TextButton><TextButton>删标F4</TextButton><TextButton>增项<u>A</u></TextButton>
            <TextButton>回溯<u>H</u></TextButton><TextButton>预览<u>P</u></TextButton><TextButton>取消审核</TextButton>
          </ResultActions>
        </MidPanel>
        <SideSplitter><DotsV /></SideSplitter>

        <RightPanel>
          <TabRow>
            {['病人', '待检', '历史', '比较', '设置'].map((t, i) => <PanelTab key={t} $active={i === 0}>{t}</PanelTab>)}
            <DeviceLabel htmlFor="device">仪器切换：</DeviceLabel>
            <Select id="device" w={122} value="中元-ZYBIB-Q7" />
            <TabButton $w={114} $h={20}><Refresh s={16} />接口启动(F7)</TabButton>
          </TabRow>
          <FilterRow>
            <Label htmlFor="filter" $w={78}>标本过滤：</Label>
            <SelectBox $w={195}>
              <NativeSelect id="filter"><option /></NativeSelect>
              <Triangle />
            </SelectBox>
            <FilterCount>标本个数：1 个</FilterCount>
            <PushButton $w={90}>手动样本质控</PushButton>
          </FilterRow>
          <Grid>
            <GroupHint>拖动列标题到此处进行分类汇总</GroupHint>
            <PatientTable>
              <colgroup>{columns.map(([n, w]) => <col key={n} width={w} />)}</colgroup>
              <thead><tr>{columns.map(([n]) => <th key={n}>{n}</th>)}</tr></thead>
              <tbody><tr>{columns.map(([n, , v, k]) => <Cell key={n} $kind={k}>{v}</Cell>)}</tr></tbody>
            </PatientTable>
            <GridSpace />
            <GridFooter><FooterCell>样本数：1</FooterCell></GridFooter>
            <HScroll $left={17} $w="46%" />
            <Highlight $x={38} $y={7} $w={123} $h={101} />
          </Grid>
          <Actions>
            <BarcodeBox>
              <BarcodeMode>
                <label htmlFor="barcode">条码编号：</label>
                <DropButton aria-label="选择编号类型"><Triangle /></DropButton>
              </BarcodeMode>
              <LineInput id="barcode" />
            </BarcodeBox>
            <ActionColumn>
              <ScanRow>
                <ScanLink href="#">申请单扫描</ScanLink>
                <WideButton $w={69}><Swap />补挂</WideButton>
              </ScanRow>
              <ButtonRow>
                <PushButton $w={83} $h={29}><Server />区域核收</PushButton>
                <PushButton $w={76} $h={29}><Server />批核(I)</PushButton>
                <Stack>
                  <PushButton $w={85} $h={23}><HandDoc />核收(F2)</PushButton>
                  <PushButton $w={85} $h={23}><HandDoc />公卫核收</PushButton>
                </Stack>
                <PushButton $w={82} $h={29}><Refresh s={17} />刷新(F5)</PushButton>
                <Marked>
                  <PushButton $w={82} $h={29}><SaveIcon />保存(F1)</PushButton>
                  <Highlight $x={2} $y={-22} $w={85} $h={69} />
                </Marked>
                <PushButton $w={77} $h={29}><Alert />放弃(C)</PushButton>
                <Marked>
                  <PushButton $w={84} $h={29}><DocCheck />审核(F8)</PushButton>
                  <Highlight $x={-4} $y={-26} $w={95} $h={74} />
                </Marked>
                <PushButton $w={76} $h={29}><Printer />打印(P)</PushButton>
                <PushButton $w={76} $h={29}><DocCheck two />批审(B)</PushButton>
                <PushButton $w={76} $h={29}><Printer plus />批打(E)</PushButton>
                <PushButton $w={27} $h={29} aria-label="退出"><Door /></PushButton>
              </ButtonRow>
            </ActionColumn>
          </Actions>
        </RightPanel>
      </Main>

      <StatusBar>
        <StatusCell $w={89} $pl={14}>网络检测</StatusCell>
        <StatusCell $w={263} />
        <StatusCell $w={286} />
        <StatusCell>工号：gly16000   登陆人：人民医院管理员</StatusCell>
        <StatusCell $w={132}>审核人：人民医院管理员</StatusCell>
        <StatusCell $w={251} />
      </StatusBar>
      <Taskbar />

      <ImeBar>
        <svg width="20" height="20" viewBox="0 0 20 20"><path d="M17 3C11 1 4 3 4 6.500S16 9 16 13 8 18 3 16.500" fill="none" stroke="#ff6d0a" strokeWidth="4" /></svg>
        <ImeDivider />
        <span>中</span>
        <svg width="12" height="18" viewBox="0 0 12 18"><circle cx="3" cy="5" r="2" fill="none" stroke="#111" strokeWidth="1.500" /><path d="M8 10h3c1 2-1 5-3 6z" fill="#111" /></svg>
        <svg width="18" height="18" viewBox="0 0 18 18" fill="none" stroke="#111" strokeWidth="1.600"><path d="M16 7a7.500 7.500 0 1 1-3-4M5.500 10c1 4 6 4 7 0M6 6v2M11 6v2M14 3l3 3" /></svg>
        <svg width="14" height="18" viewBox="0 0 14 18" fill="none" stroke="#111" strokeWidth="1.600"><rect x="4" y="1" width="6" height="11" rx="3" /><path d="M1 8c0 8 12 8 12 0M7 14v3" /></svg>
        <svg width="17" height="17" viewBox="0 0 17 17" fill="none" stroke="#111" strokeWidth="1.600"><rect x="1" y="1" width="15" height="15" rx="2" /><path d="M4 5.500h9M4 8.500h9" strokeDasharray="1.800 1.600" /><path d="M5 12.500h7" /></svg>
        <svg width="20" height="22" viewBox="0 0 20 22">
          <defs><linearGradient id="shirt" x1="0" y1="0" x2="0.300" y2="1"><stop offset="0" stopColor="#ff5a4a" /><stop offset=".5" stopColor="#a066f0" /><stop offset="1" stopColor="#3fa2ff" /></linearGradient></defs>
          <path d="M1 7l4-2 3 2 3-2 4 2-1 5h-1v8H3v-8H2z" fill="url(#shirt)" /><circle cx="15.500" cy="4.500" r="4" fill="#ff5030" />
        </svg>
        <svg width="17" height="17" viewBox="0 0 17 17" fill="none" stroke="#111" strokeWidth="1.800"><rect x="1" y="1" width="5" height="5" /><circle cx="13" cy="3.500" r="2.500" /><rect x="1" y="10.500" width="5" height="5" /><rect x="10.500" y="10.500" width="5" height="5" /></svg>
        <svg width="21" height="20" viewBox="0 0 21 20"><path d="M1 10c0-6 3-8 8-8s9 3 9 8-4 8-9 8-8-3-8-8z" fill="#fff4f0" stroke="#f0dcd8" /><path d="M2 7l13-2v3c-2 3-5 1-6 1-2 2-6 2-7-2z" fill="#f05a1e" /><path d="M4 8h3M10 7h3" stroke="#222" strokeWidth="1.500" /><path d="M11 13l-2 1" stroke="#333" /><path d="M18 3l1 3 2 1-2 1-1 3-1-3-2-1 2-1z" fill="#ffd23a" /></svg>
      </ImeBar>
    </Shell>
  );
}
